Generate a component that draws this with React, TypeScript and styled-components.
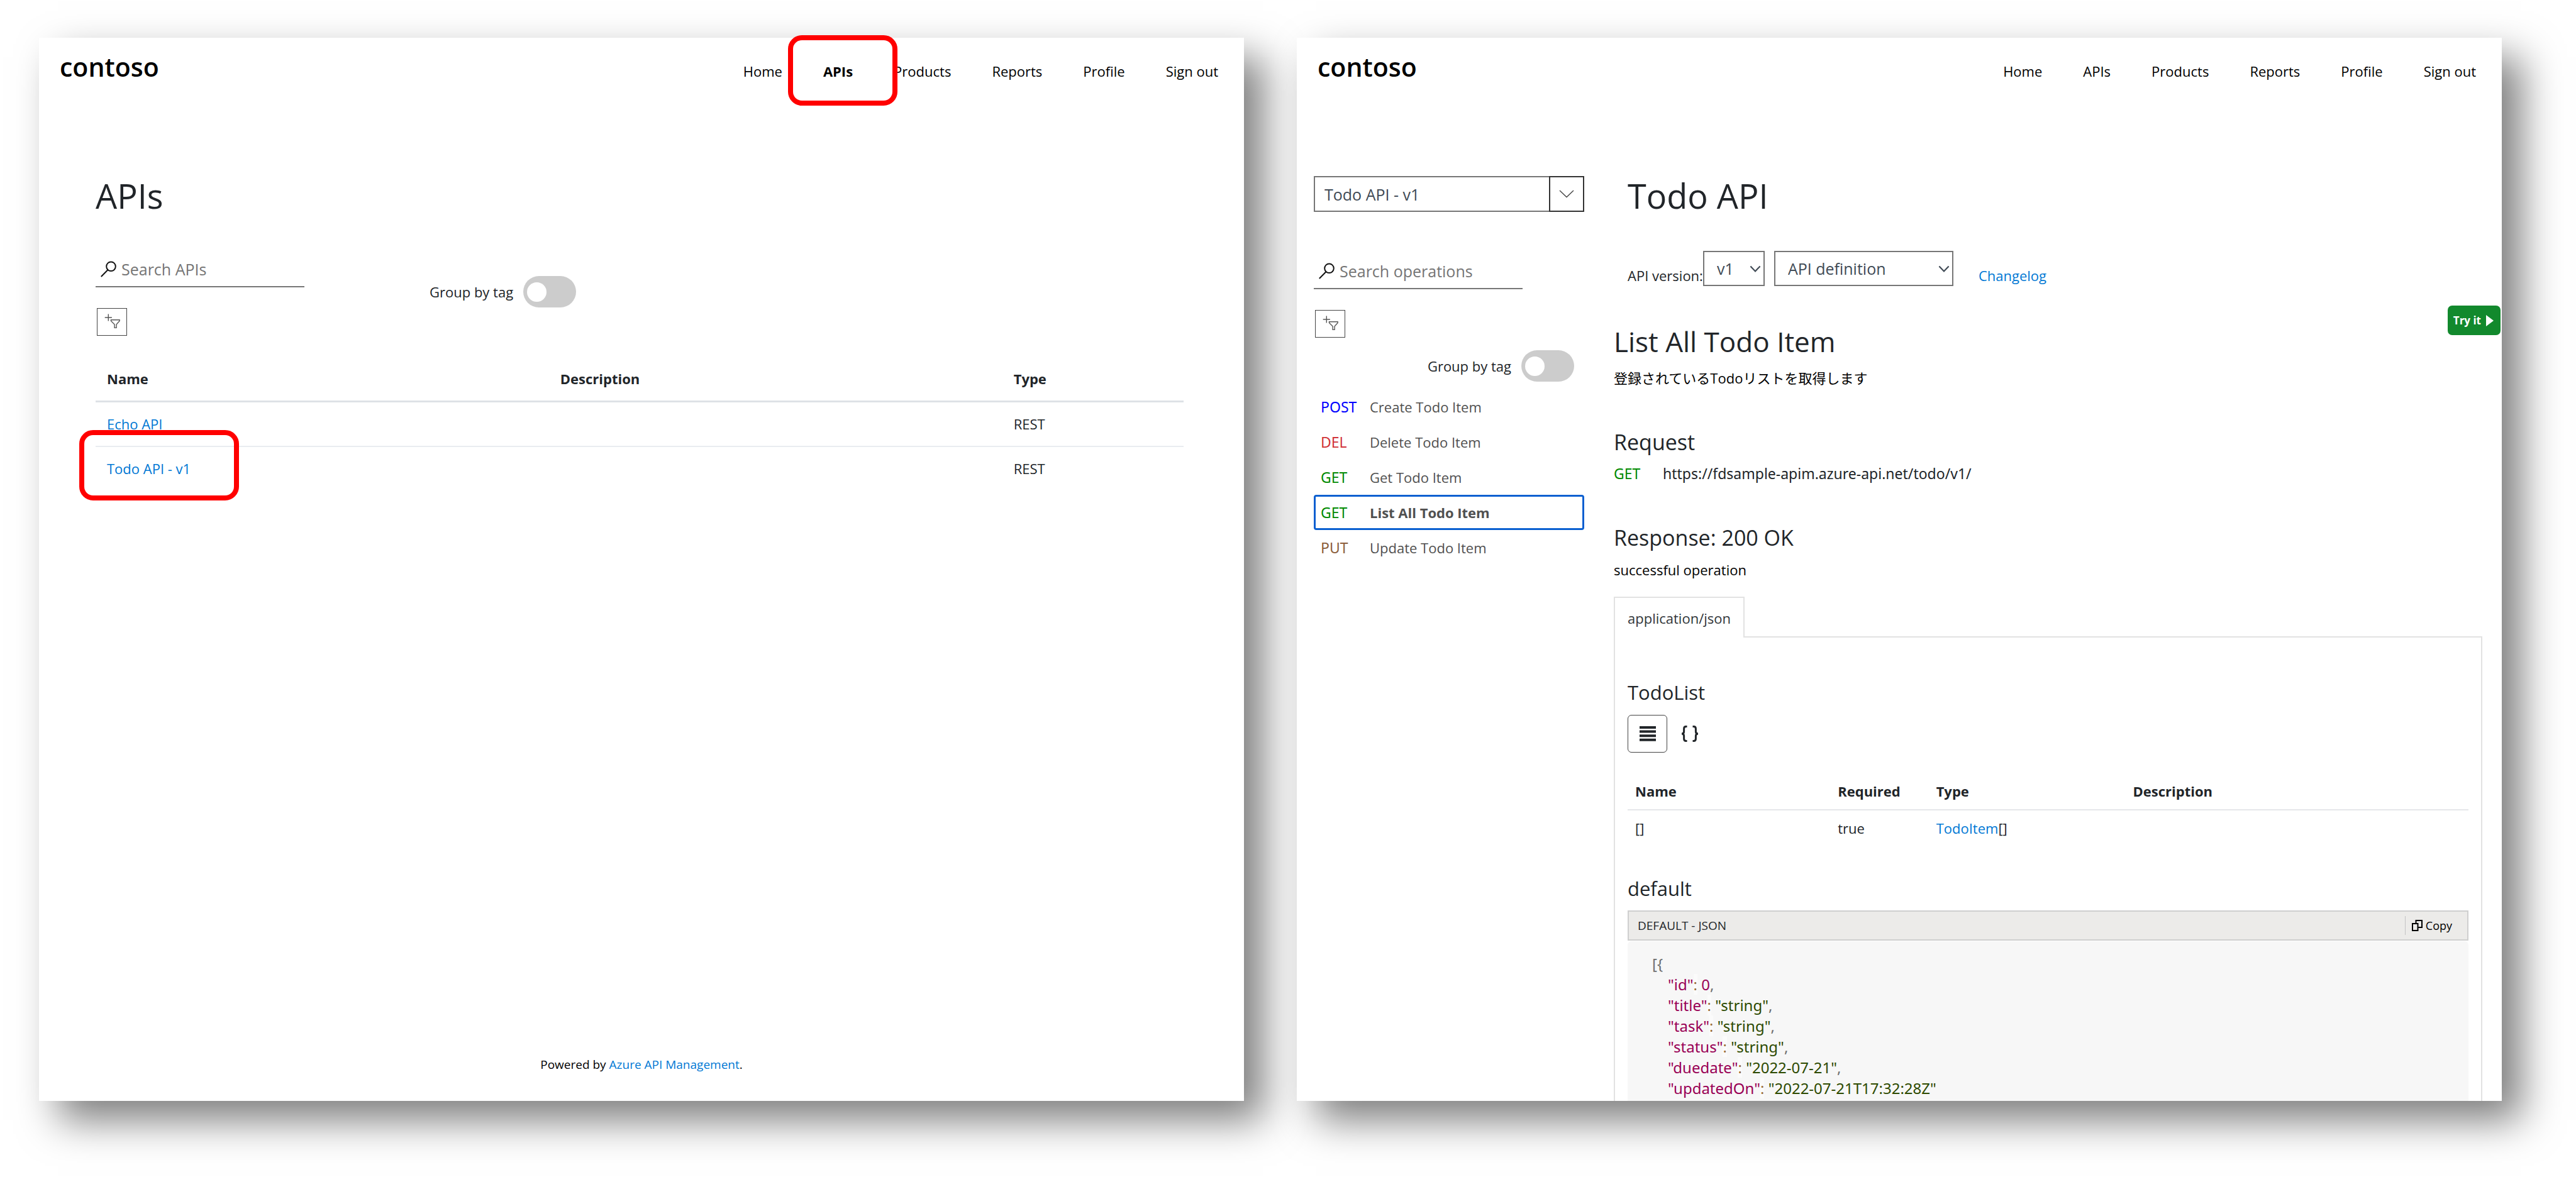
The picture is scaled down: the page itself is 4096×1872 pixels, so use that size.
import React, { useState } from "react";
import styled, { createGlobalStyle, css } from "styled-components";

const sans = `"Open Sans", "Noto Sans CJK JP", sans-serif`;
const techSans = `"Noto Sans", "Noto Sans CJK JP", sans-serif`;

const GlobalStyle = createGlobalStyle`
  *, *::before, *::after { box-sizing: border-box; }
  body {
    margin: 0;
    background: #ffffff;
    color: #212529;
    font-family: ${sans};
    font-size: 22px;
    line-height: 33px;
  }
  h1, h2, h3, h4, p, ul, pre { margin: 0; padding: 0; }
  button, input, select { margin: 0; font-family: inherit; border-radius: 0; }
`;

const Page = styled.div`
  min-height: 100vh;
  padding: 60px 118px 121px 62px;
  display: grid;
  grid-template-columns: minmax(0, 1fr) minmax(0, 1fr);
  gap: 84px;
`;

const Panel = styled.section`
  position: relative;
  display: flex;
  flex-direction: column;
  background: #ffffff;
  box-shadow: 31px 31px 60px rgba(0, 0, 0, 0.51);
`;

const Header = styled.header`
  display: flex;
  justify-content: space-between;
  align-items: baseline;
  height: 100px;
  padding: 18px 41px 0 33px;
`;

const Logo = styled.a`
  color: #000000;
  font-size: 41px;
  font-weight: 600;
  line-height: 56px;
  text-decoration: none;
`;

const Nav = styled.nav`
  display: flex;
  gap: 65px;
`;

const NavLink = styled.a<{ $active?: boolean }>`
  color: #000000;
  font-weight: ${(p) => (p.$active ? 700 : 400)};
  text-decoration: none;
`;

const Link = styled.a`
  color: #0078d4;
  text-decoration: none;
`;

const Highlight = styled.div`
  position: absolute;
  height: 112px;
  border: 8px solid #ff0000;
  border-radius: 22px;
  pointer-events: none;
`;

const NavHighlight = styled(Highlight)`
  top: -4px;
  right: 551px;
  width: 174px;
`;

const RowHighlight = styled(Highlight)`
  top: 624px;
  left: 64px;
  width: 254px;
`;

const PageTitle = styled.h1`
  font-size: 54px;
  font-weight: 400;
  line-height: 72px;
`;

const ListMain = styled.main`
  flex: 1;
  padding: 115px 96px 0 90px;
`;

const FilterRow = styled.div`
  display: flex;
  align-items: flex-start;
  margin: 53px 0 34px;
`;

const FilterColumn = styled.div`
  flex: 0 0 531px;
`;

const SearchBox = styled.label`
  display: flex;
  align-items: center;
  gap: 8px;
  width: 332px;
  height: 57px;
  padding-left: 8px;
  border-bottom: 2px solid #767676;
`;

const SearchInput = styled.input`
  flex: 1;
  min-width: 0;
  padding: 0;
  border: 0;
  outline: 0;
  background: transparent;
  font-size: 25px;
  line-height: 38px;
  &::placeholder {
    color: #757575;
    opacity: 1;
  }
`;

const FilterButton = styled.button`
  display: block;
  width: 48px;
  height: 44px;
  margin: 33px 0 0 2px;
  padding: 0;
  border: 1px solid #444444;
  background: #ffffff;
`;

const ToggleLabel = styled.label`
  display: flex;
  align-items: center;
  gap: 16px;
`;

const ListToggle = styled(ToggleLabel)`
  margin-top: 39px;
`;

const Switch = styled.input`
  appearance: none;
  display: flex;
  align-items: center;
  width: 84px;
  height: 50px;
  padding: 0 6px;
  border-radius: 25px;
  background: #cccccc;
  &::before {
    content: "";
    width: 31px;
    height: 31px;
    border-radius: 50%;
    background: #ffffff;
  }
  &:checked {
    justify-content: flex-end;
    background: #0078d4;
  }
`;

const Table = styled.table<{ $dense?: boolean }>`
  width: 100%;
  table-layout: fixed;
  border-collapse: separate;
  border-spacing: 0;
  th,
  td {
    padding: ${(p) => (p.$dense ? "12px" : "18px")};
    text-align: left;
  }
  th {
    font-weight: 700;
    border-bottom: ${(p) => (p.$dense ? "2px solid #e5e7ea" : "3px solid #dee2e6")};
  }
  tbody tr:not(:last-child) td {
    border-bottom: 2px solid #e9ecf0;
  }
`;

const Th = styled.th<{ $width?: string }>`
  width: ${(p) => p.$width ?? "auto"};
`;

const Footer = styled.footer`
  padding-bottom: 44px;
  color: #000000;
  font-size: 19px;
  line-height: 28px;
  text-align: center;
`;

const DetailLayout = styled.div`
  flex: 1;
  display: grid;
  grid-template-columns: 430px minmax(0, 1fr);
  gap: 47px;
  padding: 0 31px 0 27px;
`;

const Sidebar = styled.aside`
  padding-top: 120px;
`;

const Combo = styled.div`
  display: flex;
  height: 57px;
  margin-bottom: 66px;
`;

const ComboInput = styled.input`
  flex: 1;
  min-width: 0;
  padding: 0 15px;
  border: 2px solid #767676;
  border-right: 0;
  color: #404a55;
  font-size: 25px;
`;

const ComboButton = styled.button`
  display: flex;
  align-items: center;
  justify-content: center;
  width: 56px;
  padding: 0;
  border: 2px solid #333333;
  background: #ffffff;
`;

const SidebarToggle = styled(ToggleLabel)`
  justify-content: flex-end;
  margin: 20px 16px 12px 0;
`;

const Operations = styled.ul`
  list-style: none;
`;

const Operation = styled.a<{ $active?: boolean }>`
  display: flex;
  align-items: center;
  height: 56px;
  padding-left: 11px;
  color: #505050;
  text-decoration: none;
  ${(p) =>
    p.$active &&
    css`
      font-weight: 700;
      border-radius: 4px;
      box-shadow: inset 0 0 0 3px #0a5fd0;
    `}
`;

const methodColors: Record<string, string> = {
  POST: "#0000ff",
  DEL: "#d13438",
  GET: "#008a00",
  PUT: "#8b5e3c",
};

const Method = styled.span<{ $method: string }>`
  width: 78px;
  color: ${(p) => methodColors[p.$method]};
  font-family: ${techSans};
  font-size: 23px;
  font-weight: 400;
`;

const DetailMain = styled.main`
  display: flex;
  flex-direction: column;
  padding-top: 115px;
`;

const DetailIntro = styled.div`
  padding-left: 22px;
`;

const VersionRow = styled.div`
  display: flex;
  align-items: flex-end;
  margin: 52px 0 31px;
`;

const SelectBox = styled.span<{ $width: number }>`
  position: relative;
  width: ${(p) => p.$width}px;
  svg {
    position: absolute;
    top: 23px;
    right: 6px;
    pointer-events: none;
  }
`;

const Select = styled.select`
  appearance: none;
  display: block;
  width: 100%;
  height: 56px;
  padding: 0 20px;
  border: 2px solid #767676;
  background: #ffffff;
  color: #404a55;
  font-size: 25px;
`;

const DefinitionSelect = styled(SelectBox)`
  margin: 0 40px 0 15px;
`;

const TitleRow = styled.div`
  display: flex;
  justify-content: space-between;
  align-items: flex-start;
  margin-right: -29px;
`;

const OperationTitle = styled.h2`
  padding-top: 27px;
  font-size: 44px;
  font-weight: 400;
  line-height: 60px;
`;

const TryButton = styled.button`
  display: flex;
  align-items: center;
  gap: 8px;
  height: 47px;
  padding: 0 11px 0 9px;
  border: 0;
  border-radius: 7px;
  background: #12892d;
  color: #ffffff;
  font-size: 17px;
  font-weight: 700;
`;

const Text = styled.p`
  margin-top: 12px;
  color: #000000;
`;

const SectionTitle = styled.h3`
  margin-top: 62px;
  font-size: 34px;
  font-weight: 400;
  line-height: 46px;
`;

const Endpoint = styled.div`
  display: flex;
  margin-top: 11px;
`;

const Url = styled.span`
  font-family: ${techSans};
  font-size: 23px;
`;

const Tab = styled.button`
  position: relative;
  align-self: flex-start;
  height: 65px;
  margin: 26px 0 -2px;
  padding: 0 20px;
  border: 2px solid #e2e2e2;
  border-bottom: 0;
  background: #ffffff;
  color: #32363a;
  font-size: 22px;
`;

const TabPanel = styled.div`
  flex: 1;
  display: flex;
  flex-direction: column;
  padding: 66px 20px 0;
  border: 2px solid #e2e2e2;
  border-bottom: 0;
`;

const SubTitle = styled.h4`
  font-size: 31px;
  font-weight: 400;
  line-height: 42px;
`;

const ViewButtons = styled.div`
  display: flex;
  gap: 4px;
  margin: 15px 0 33px;
`;

const ViewButton = styled.button<{ $active?: boolean }>`
  display: flex;
  align-items: center;
  justify-content: center;
  width: 63px;
  height: 60px;
  padding: 0;
  border: 1px solid ${(p) => (p.$active ? "#444444" : "transparent")};
  border-radius: 6px;
  background: transparent;
`;

const SampleTitle = styled(SubTitle)`
  margin: 46px 0 14px;
`;

const CodeHeader = styled.div`
  display: flex;
  align-items: center;
  justify-content: space-between;
  height: 48px;
  padding: 0 14px;
  border: 2px solid #cfcfcf;
  background: #ecebe9;
  font-size: 19px;
`;

const CopyButton = styled.button`
  display: flex;
  align-items: center;
  gap: 5px;
  height: 30px;
  padding: 0 10px;
  border: 0;
  border-left: 1px solid #c4c4c4;
  background: transparent;
  color: #000000;
  font-size: 18px;
`;

const CodeBody = styled.pre`
  flex: 1;
  margin-top: 1px;
  padding: 19px 39px 0;
  border-radius: 6px 6px 0 0;
  background: #f7f7f7;
  color: #6e6e6e;
  font-family: ${techSans};
  font-size: 24px;
  line-height: 33px;
`;

const Key = styled.span`
  color: #990055;
`;

const Colon = styled.span`
  color: #9a6e3a;
  background: rgba(255, 255, 255, 0.5);
`;

const StringValue = styled.span`
  color: #2d4a00;
`;

const SearchIcon = () => (
  <svg width="25" height="26" viewBox="0 0 25 26" fill="none" stroke="#111" strokeWidth="2" aria-hidden="true">
    <circle cx="16.5" cy="8.8" r="7.3" />
    <path d="M11.4 14.2 0.8 25" />
  </svg>
);

const FilterIcon = () => (
  <svg width="46" height="42" viewBox="0 0 46 42" fill="none" stroke="#555" strokeWidth="1.4" aria-hidden="true">
    <path d="M17.3 8.5v11M11.7 14h11.2" />
    <path d="M21.5 17.8h13.6v1.6l-5 5.6v5.4h-3V25l-5.6-5.6z" />
  </svg>
);

const ComboChevron = () => (
  <svg width="24" height="13" viewBox="0 0 24 13" fill="none" stroke="#444" strokeWidth="1.4" aria-hidden="true">
    <path d="M1 1l11 10.6L23 1" />
  </svg>
);

const SelectChevron = () => (
  <svg width="18" height="12" viewBox="0 0 18 12" fill="none" stroke="#404a55" strokeWidth="2.2" aria-hidden="true">
    <path d="M1.400 1.400 9 9.400l7.600-8" />
  </svg>
);

const ListIcon = () => (
  <svg width="26" height="24" viewBox="0 0 26 24" fill="#212529" aria-hidden="true">
    <path d="M0 0h26v4H0zM0 6.600h26v4H0zM0 13.200h26v4H0zM0 19.800h26v4H0z" />
  </svg>
);

const BracesIcon = () => (
  <svg width="30" height="26" viewBox="0 0 30 26" fill="none" stroke="#212529" strokeWidth="3" aria-hidden="true">
    <path d="M10.500 1.500H9C6.500 1.500 5.600 2.600 5.600 5v4.500c0 2.200-.8 3.500-3.600 3.500 2.800 0 3.600 1.300 3.600 3.500V21c0 2.400.9 3.500 3.400 3.500h1.500" />
    <path d="M19.500 1.500H21c2.500 0 3.400 1.100 3.400 3.500v4.500c0 2.200.8 3.500 3.600 3.500-2.800 0-3.600 1.300-3.600 3.500V21c0 2.400-.9 3.500-3.400 3.500h-1.500" />
  </svg>
);

const PlayIcon = () => (
  <svg width="12" height="18" viewBox="0 0 12 18" fill="#fff" aria-hidden="true">
    <path d="M0 0l12 9-12 9z" />
  </svg>
);

const CopyIcon = () => (
  <svg width="17" height="18" viewBox="0 0 17 18" fill="none" stroke="#000" strokeWidth="2" aria-hidden="true">
    <path d="M1 6h8.500v11H1z" />
    <path d="M6.500 6V1H16v11H9.500" />
  </svg>
);

const navItems = ["Home", "APIs", "Products", "Reports", "Profile", "Sign out"];

const apis = [
  { name: "Echo API", type: "REST" },
  { name: "Todo API - v1", type: "REST" },
];

const operations = [
  { method: "POST", name: "Create Todo Item" },
  { method: "DEL", name: "Delete Todo Item" },
  { method: "GET", name: "Get Todo Item" },
  { method: "GET", name: "List All Todo Item" },
  { method: "PUT", name: "Update Todo Item" },
];

const sample = [
  { key: "title", value: "string", comma: true },
  { key: "task", value: "string", comma: true },
  { key: "status", value: "string", comma: true },
  { key: "duedate", value: "2022-07-21", comma: true },
  { key: "updatedOn", value: "2022-07-21T17:32:28Z", comma: false },
];

const SiteHeader = ({ active }: { active?: string }) => (
  <Header>
    <Logo href="#">contoso</Logo>
    <Nav>
      {navItems.map((item) => (
        <NavLink key={item} href="#" $active={item === active}>
          {item}
        </NavLink>
      ))}
    </Nav>
  </Header>
);

const Search = ({ placeholder }: { placeholder: string }) => (
  <SearchBox>
    <SearchIcon />
    <SearchInput type="text" placeholder={placeholder} aria-label={placeholder} />
  </SearchBox>
);

const GroupSwitch = () => {
  const [on, setOn] = useState(false);
  return <Switch type="checkbox" role="switch" checked={on} onChange={() => setOn(!on)} />;
};

const ApiListPanel = () => (
  <Panel>
    <SiteHeader active="APIs" />
    <ListMain>
      <PageTitle>APIs</PageTitle>
      <FilterRow>
        <FilterColumn>
          <Search placeholder="Search APIs" />
          <FilterButton type="button" aria-label="Add filter">
            <FilterIcon />
          </FilterButton>
        </FilterColumn>
        <ListToggle>
          Group by tag
          <GroupSwitch />
        </ListToggle>
      </FilterRow>
      <Table>
        <thead>
          <tr>
            <Th $width="41.6667%">Name</Th>
            <Th $width="41.6667%">Description</Th>
            <Th>Type</Th>
          </tr>
        </thead>
        <tbody>
          {apis.map((api) => (
            <tr key={api.name}>
              <td>
                <Link href="#">{api.name}</Link>
              </td>
              <td />
              <td>{api.type}</td>
            </tr>
          ))}
        </tbody>
      </Table>
    </ListMain>
    <Footer>
      Powered by <Link href="#">Azure API Management</Link>.
    </Footer>
    <NavHighlight aria-hidden="true" />
    <RowHighlight aria-hidden="true" />
  </Panel>
);

const ApiDetailPanel = () => (
  <Panel>
    <SiteHeader />
    <DetailLayout>
      <Sidebar>
        <Combo>
          <ComboInput type="text" defaultValue="Todo API - v1" aria-label="API" />
          <ComboButton type="button" aria-label="Open API list">
            <ComboChevron />
          </ComboButton>
        </Combo>
        <Search placeholder="Search operations" />
        <FilterButton type="button" aria-label="Add filter">
          <FilterIcon />
        </FilterButton>
        <SidebarToggle>
          Group by tag
          <GroupSwitch />
        </SidebarToggle>
        <Operations>
          {operations.map((op) => (
            <li key={op.name}>
              <Operation href="#" $active={op.name === "List All Todo Item"}>
                <Method $method={op.method}>{op.method}</Method>
                {op.name}
              </Operation>
            </li>
          ))}
        </Operations>
      </Sidebar>
      <DetailMain>
        <DetailIntro>
          <PageTitle>Todo API</PageTitle>
          <VersionRow>
            <label htmlFor="api-version">API version:</label>
            <SelectBox $width={98}>
              <Select id="api-version">
                <option>v1</option>
              </Select>
              <SelectChevron />
            </SelectBox>
            <DefinitionSelect $width={285}>
              <Select aria-label="API definition">
                <option>API definition</option>
              </Select>
              <SelectChevron />
            </DefinitionSelect>
            <Link href="#">Changelog</Link>
          </VersionRow>
        </DetailIntro>
        <TitleRow>
          <OperationTitle>List All Todo Item</OperationTitle>
          <TryButton type="button">
            Try it
            <PlayIcon />
          </TryButton>
        </TitleRow>
        <Text lang="ja">登録されているTodoリストを取得します</Text>
        <SectionTitle>Request</SectionTitle>
        <Endpoint>
          <Method $method="GET">GET</Method>
          <Url>https://fdsample-apim.azure-api.net/todo/v1/</Url>
        </Endpoint>
        <SectionTitle>Response: 200 OK</SectionTitle>
        <Text>successful operation</Text>
        <Tab type="button">application/json</Tab>
        <TabPanel>
          <SubTitle>TodoList</SubTitle>
          <ViewButtons>
            <ViewButton type="button" $active aria-label="Table view">
              <ListIcon />
            </ViewButton>
            <ViewButton type="button" aria-label="Schema view">
              <BracesIcon />
            </ViewButton>
          </ViewButtons>
          <Table $dense>
            <thead>
              <tr>
                <Th $width="24.1%">Name</Th>
                <Th $width="11.7%">Required</Th>
                <Th $width="23.4%">Type</Th>
                <Th>Description</Th>
              </tr>
            </thead>
            <tbody>
              <tr>
                <td>[]</td>
                <td>true</td>
                <td>
                  <Link href="#">TodoItem</Link>[]
                </td>
                <td />
              </tr>
            </tbody>
          </Table>
          <SampleTitle>default</SampleTitle>
          <CodeHeader>
            <span>DEFAULT - JSON</span>
            <CopyButton type="button">
              <CopyIcon />
              Copy
            </CopyButton>
          </CodeHeader>
          <CodeBody>
            {"[{\n    "}
            <Key>"id"</Key>
            <Colon>:</Colon> <Key>0</Key>,
            {sample.map((line) => (
              <React.Fragment key={line.key}>
                {"\n    "}
                <Key>"{line.key}"</Key>
                <Colon>:</Colon> <StringValue>"{line.value}"</StringValue>
                {line.comma ? "," : ""}
              </React.Fragment>
            ))}
          </CodeBody>
        </TabPanel>
      </DetailMain>
    </DetailLayout>
  </Panel>
);

export default function App() {
  return (
    <>
      <GlobalStyle />
      <Page>
        <ApiListPanel />
        <ApiDetailPanel />
      </Page>
    </>
  );
}
